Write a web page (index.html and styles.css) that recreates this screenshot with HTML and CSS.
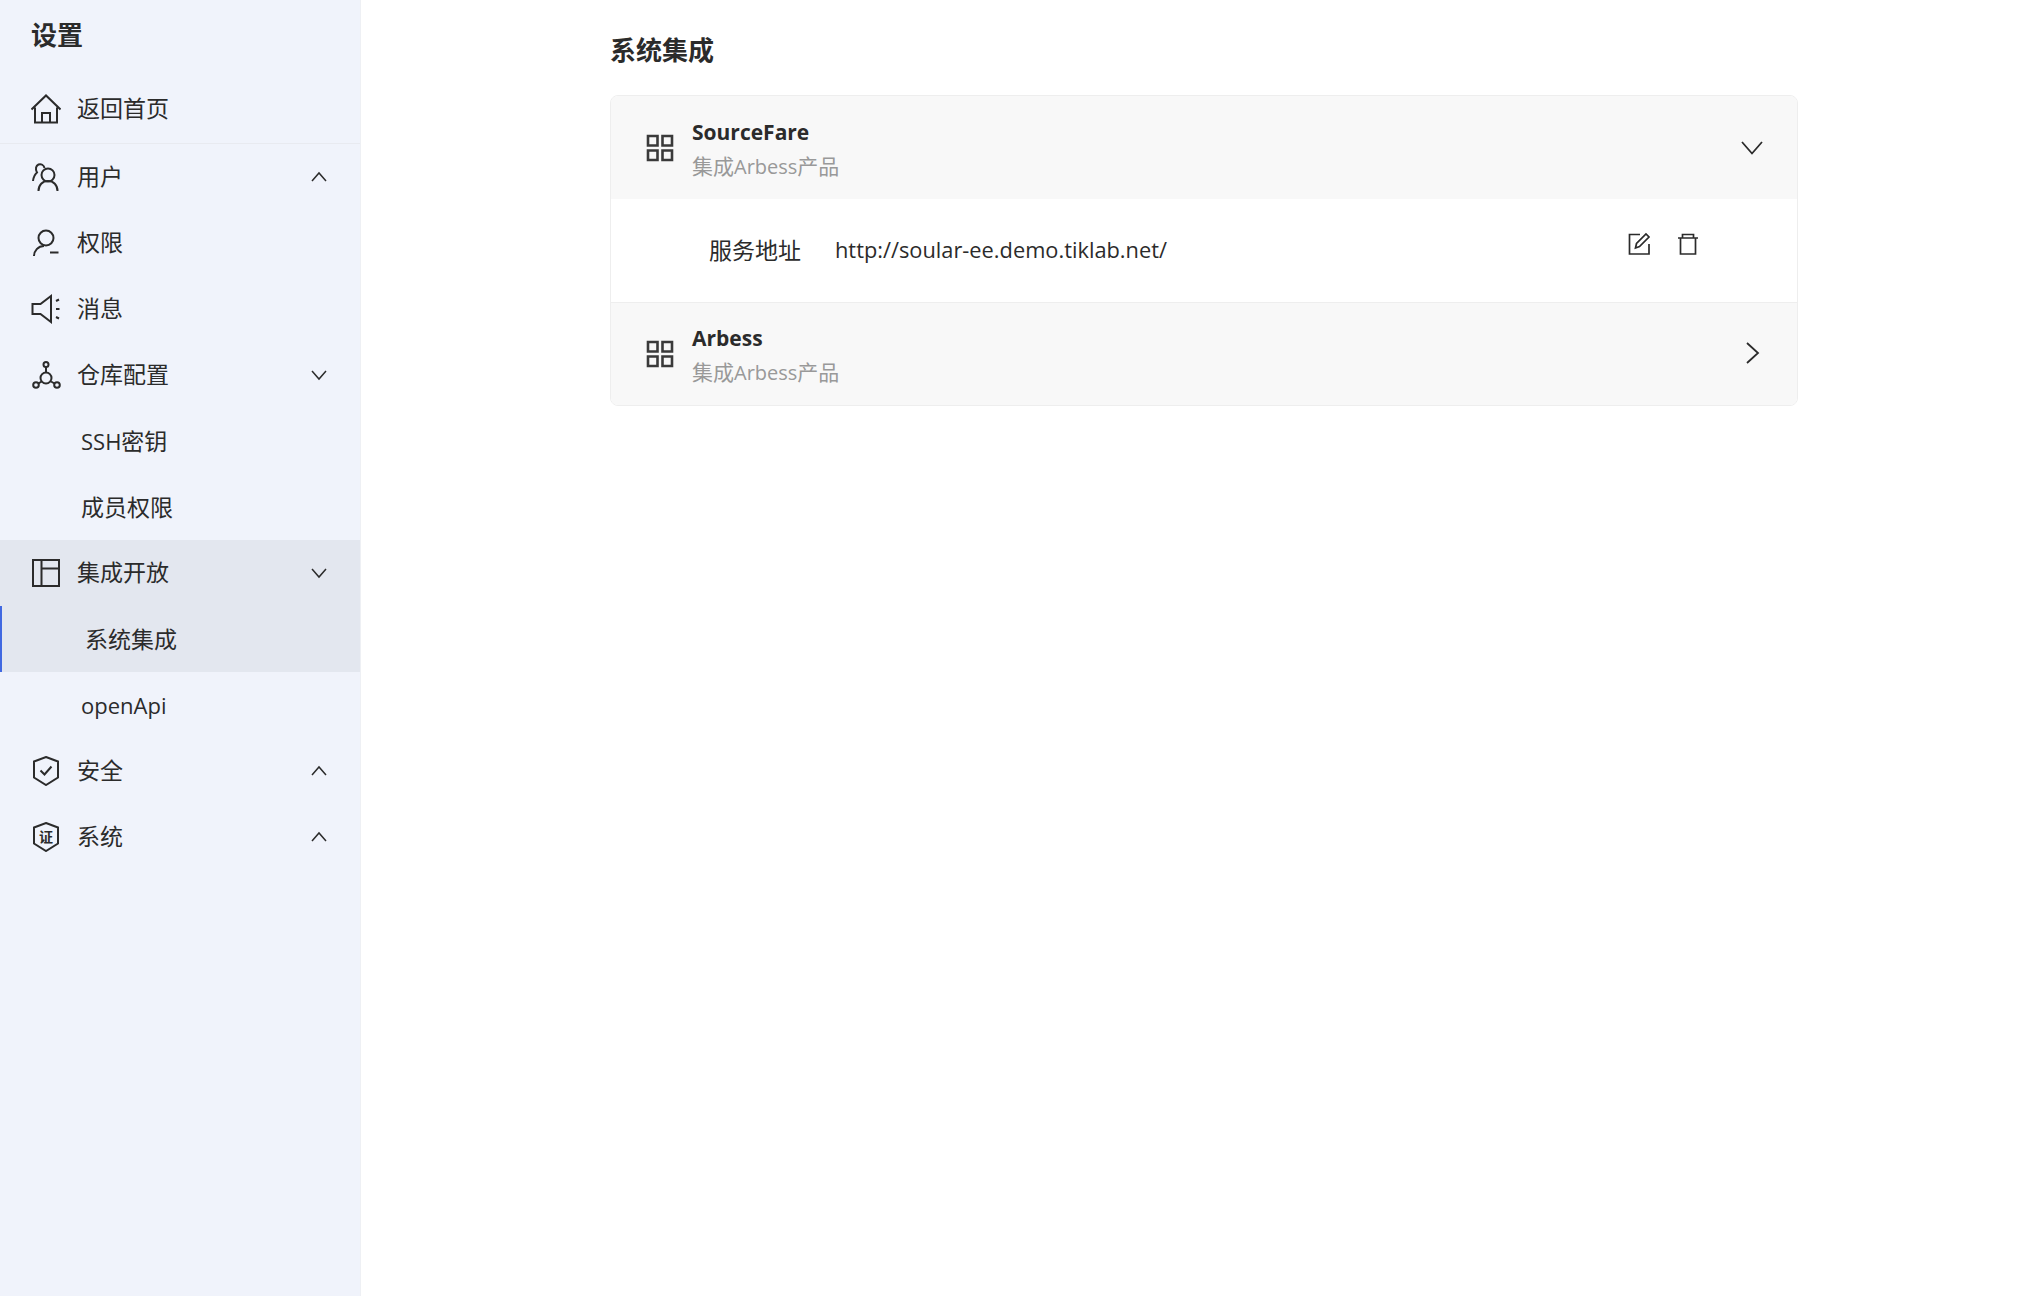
FILE: index.html
```html
<!DOCTYPE html>
<html lang="zh-CN">

<head>
    <meta charset="UTF-8">
    <title>系统集成</title>
    <link rel="stylesheet" href="styles.css">
</head>

<body>
    <div class="layout">
        <!-- Sidebar -->
        <aside class="sidebar">
            <div class="side-title">设置</div>

            <div class="menu-row home-row">
                <svg class="menu-icon" viewBox="0 0 30 30"><path d="M0.500 15.500 15 1.500l14.500 14M4 13.500v15h22v-15M11 28.500V19h8v9.500"/></svg>
                <span class="menu-text">返回首页</span>
            </div>

            <div class="menu-row">
                <svg class="menu-icon" viewBox="0 0 30 30"><circle cx="17" cy="13" r="6.500"/><path d="M7.500 29c0-6 4-10 9.500-10s9.500 4 9.500 10M13.500 6C13 3 10 1.500 7.500 2.500 5 3.500 4 7 6 10.500 3.500 12.500 2.500 15 2 19"/></svg>
                <span class="menu-text">用户</span>
                <svg class="arrow" viewBox="0 0 16 16"><path d="M1 12 8 4l7 8"/></svg>
            </div>

            <div class="menu-row">
                <svg class="menu-icon" viewBox="0 0 30 30"><circle cx="15" cy="10" r="7.500"/><path d="M3 28c0-5 4-10 10-10M19 24.500h8.500"/></svg>
                <span class="menu-text">权限</span>
            </div>

            <div class="menu-row">
                <svg class="menu-icon" viewBox="0 0 30 30"><path d="M20 2v26L9.500 20H1.500V10h8zM25 7l3-1.500M25 15h3.500M25 23l3 1.500"/></svg>
                <span class="menu-text">消息</span>
            </div>

            <div class="menu-row">
                <svg class="menu-icon" viewBox="0 0 30 30"><circle cx="15" cy="4.500" r="2.500"/><circle cx="5" cy="25" r="2.800"/><circle cx="26" cy="25" r="2.800"/><circle cx="15" cy="18" r="5.500"/><path d="M15 7v5.500M10.500 21.500 7.500 23.500M20 21.500l3.500 2"/></svg>
                <span class="menu-text">仓库配置</span>
                <svg class="arrow" viewBox="0 0 16 16"><path d="m1 4 7 8 7-8"/></svg>
            </div>

            <div class="menu-row sub-row"><span class="sub-text"><span class="latin">SSH</span>密钥</span></div>
            <div class="menu-row sub-row"><span class="sub-text">成员权限</span></div>

            <div class="active-group">
                <div class="menu-row">
                    <svg class="menu-icon" viewBox="0 0 30 30"><path d="M2 2h26v26H2zM10.500 2v26M10.500 10.500H28"/></svg>
                    <span class="menu-text">集成开放</span>
                    <svg class="arrow" viewBox="0 0 16 16"><path d="m1 4 7 8 7-8"/></svg>
                </div>
                <div class="menu-row sub-row sub-active"><span class="sub-text">系统集成</span></div>
            </div>

            <div class="menu-row sub-row"><span class="latin">openApi</span></div>

            <div class="menu-row">
                <svg class="menu-icon" viewBox="0 0 30 30"><path d="M15 1 27 5.500v16L15 29 3 21.500v-16zM9.500 14.500l4 4 7-8"/></svg>
                <span class="menu-text">安全</span>
                <svg class="arrow" viewBox="0 0 16 16"><path d="M1 12 8 4l7 8"/></svg>
            </div>

            <div class="menu-row">
                <svg class="menu-icon" viewBox="0 0 30 30"><path d="M15 1 27 5.500v16L15 29 3 21.500v-16z"/><text class="shield-text" x="15" y="20" text-anchor="middle">证</text></svg>
                <span class="menu-text">系统</span>
                <svg class="arrow" viewBox="0 0 16 16"><path d="M1 12 8 4l7 8"/></svg>
            </div>
        </aside>

        <!-- Content -->
        <main class="content">
            <h1 class="page-title">系统集成</h1>

            <div class="card">
                <div class="card-head">
                    <svg class="grid-icon" viewBox="0 0 28 28"><path d="M2 2h9.500v9.500H2zM16.500 2H26v9.500h-9.500zM2 16.500h9.500V26H2zM16.500 16.500H26V26h-9.500z"/></svg>
                    <div class="card-info">
                        <div class="card-name">SourceFare</div>
                        <div class="card-desc">集成<span class="desc-latin">Arbess</span>产品</div>
                    </div>
                    <svg class="card-arrow" viewBox="0 0 22 22"><path d="m1 6 10 11.500L21 6"/></svg>
                </div>
                <div class="card-body">
                    <span class="field-label">服务地址</span>
                    <span class="field-value">http://soular-ee.demo.tiklab.net/</span>
                    <div class="field-actions">
                        <svg class="action-icon" viewBox="0 0 24 24"><path d="M13 2.500H2.500v19.500h19.500V12M8.500 16l1-4.500L19 2l3 3-9.500 9.500z"/></svg>
                        <svg class="action-icon" viewBox="0 0 24 24"><path d="M2 6h20M6.500 6V2.500h11V6M4.500 6v16h15V6"/></svg>
                    </div>
                </div>
                <div class="card-head head-last">
                    <svg class="grid-icon" viewBox="0 0 28 28"><path d="M2 2h9.500v9.500H2zM16.500 2H26v9.500h-9.500zM2 16.500h9.500V26H2zM16.500 16.500H26V26h-9.500z"/></svg>
                    <div class="card-info">
                        <div class="card-name">Arbess</div>
                        <div class="card-desc">集成<span class="desc-latin">Arbess</span>产品</div>
                    </div>
                    <svg class="card-arrow" viewBox="0 0 22 22"><path d="m6 1 11 10L6 21"/></svg>
                </div>
            </div>
        </main>
    </div>
</body>

</html>
```

FILE: styles.css
```css
* {
    box-sizing: border-box;
}

body {
    margin: 0;
    font-family: "Open Sans", "Noto Sans CJK SC", sans-serif;
    font-size: 23px;
    color: #2b2b2b;
    background: #fff;
}

svg {
    fill: none;
    stroke: #2b2b2b;
    stroke-width: 2;
    flex-shrink: 0;
}

.layout {
    display: flex;
    height: 1296px;
    overflow: hidden;
}

.sidebar {
    width: 361px;
    flex-shrink: 0;
    background: #f0f3fb;
    border-right: 1px solid #eef0f4;
}

.side-title {
    height: 75px;
    padding: 16px 0 0 31px;
    font-size: 26px;
    line-height: 38px;
    font-weight: 700;
}

.menu-row {
    display: flex;
    align-items: center;
    height: 66px;
    padding: 0 33px 0 31px;
}

.home-row {
    height: 69px;
    border-bottom: 1px solid #e8eaf0;
}

.menu-icon {
    width: 30px;
    height: 30px;
}

.shield-text {
    font-size: 14px;
    font-weight: 700;
    fill: #2b2b2b;
    stroke: none;
}

.menu-text {
    flex: 1;
    margin-left: 16px;
    padding-bottom: 4px;
}

.sub-text {
    padding-bottom: 3px;
}

.latin {
    font-size: 22px;
}

.arrow {
    width: 16px;
    height: 16px;
    stroke-width: 1.500;
}

.sub-row {
    padding-left: 81px;
}

.active-group {
    background: #e3e7ef;
}

.sub-active {
    padding-left: 83px;
    border-left: 2px solid #4169e1;
}

.content {
    flex: 1;
    padding-left: 249px;
}

.page-title {
    margin: 0;
    padding-top: 31px;
    height: 95px;
    font-size: 26px;
    line-height: 38px;
    font-weight: 700;
}

.card {
    width: 1188px;
    border: 1px solid #eee;
    border-radius: 8px;
    overflow: hidden;
}

.card-head {
    display: flex;
    align-items: center;
    height: 103px;
    padding: 0 34px 0 35px;
    background: #f8f8f8;
}

.head-last {
    height: 103px;
    border-top: 1px solid #eee;
}

.grid-icon {
    width: 28px;
    height: 28px;
    stroke: #3a3a3a;
    stroke-width: 2.600;
}

.card-info {
    flex: 1;
    margin-left: 18px;
    padding-top: 3px;
}

.card-name {
    font-size: 21px;
    line-height: 34px;
    font-weight: 700;
}

.card-desc {
    font-size: 21px;
    line-height: 34px;
    color: #999;
}

.desc-latin {
    font-size: 20px;
}

.card-arrow {
    width: 22px;
    height: 22px;
    margin-bottom: 2px;
    stroke-width: 1.800;
}

.card-body {
    display: flex;
    align-items: center;
    height: 103px;
    padding: 0 97px 0 98px;
}

.field-label {
    width: 126px;
    padding-bottom: 3px;
}

.field-value {
    flex: 1;
    font-size: 21.800px;
    padding-bottom: 3px;
}

.field-actions {
    display: flex;
    gap: 25px;
    margin-bottom: 13px;
}

.action-icon {
    width: 24px;
    height: 24px;
    stroke-width: 1.700;
}
```
